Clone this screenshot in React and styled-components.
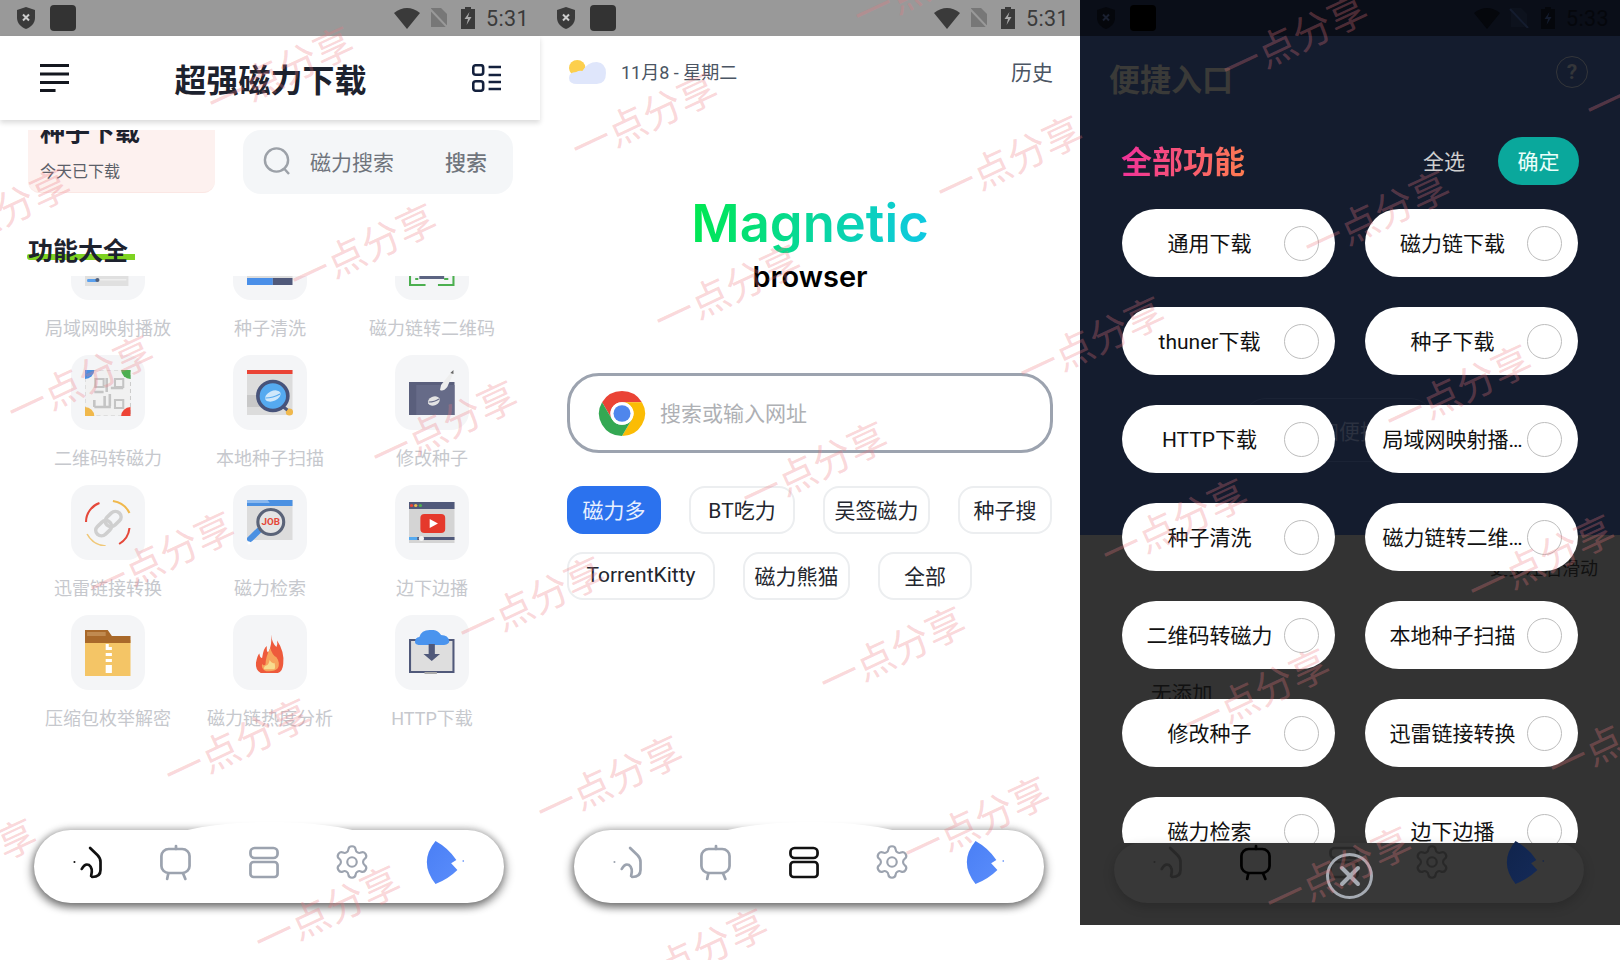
import React from 'react';
import styled, { createGlobalStyle } from 'styled-components';
import { Settings, X } from 'lucide-react';

const GlobalStyle = createGlobalStyle`
  html, body {
    margin: 0;
    padding: 0;
    background: #fff;
    font-family: Roboto, "Noto Sans CJK SC", sans-serif;
  }
  * { box-sizing: border-box; }
`;

const Page = styled.div`
  position: relative;
  width: 1620px;
  height: 960px;
  display: flex;
  align-items: flex-start;
  overflow: hidden;
  background: #fff;
`;

const Screen = styled.div`
  position: relative;
  width: 540px;
  height: ${props => props.$height || 960}px;
  display: flex;
  flex-direction: column;
  background: #fff;
  flex: none;
`;

/* status bar */
const StatusWrap = styled.div`
  height: 36px;
  flex: none;
  display: flex;
  align-items: center;
  padding: 0 11px 0 17px;
  background: ${props => props.$dim ? '#0a0e18' : '#999'};
  color: ${props => props.$dim ? '#05070c' : '#3a3a3a'};
`;

const AppSquare = styled.div`
  width: 26px;
  height: 26px;
  border-radius: 4px;
  margin-left: 15px;
  background: ${props => props.$dim ? '#000' : '#333'};
`;

const StatusRight = styled.div`
  margin-left: auto;
  display: flex;
  align-items: center;
`;

const Clock = styled.span`
  font-size: 21.5px;
  margin-left: 11px;
  letter-spacing: 0.4px;
`;

const StatusBar = ({ time, dim }) => (
  <StatusWrap $dim={dim}>
    <svg width="18" height="22" viewBox="0 0 18 22">
      <path d="M9 0 L18 3 V11 C18 16 14 20 9 22 C4 20 0 16 0 11 V3 Z" fill="currentColor" />
      <path d="M6 7.5 L12 13.5 M12 7.5 L6 13.5" stroke={dim ? '#1a2030' : '#ccc'} strokeWidth="2" />
    </svg>
    <AppSquare $dim={dim} />
    <StatusRight>
      <svg width="26" height="21" viewBox="0 0 26 21">
        <path d="M0 5 Q13 -5 26 5 L13 21 Z" fill="currentColor" />
      </svg>
      <svg width="20" height="20" viewBox="0 0 20 20" style={{ marginLeft: 9 }}>
        <path d="M2 0 H12 L18 6 V19 H2 Z" fill={dim ? '#0d121d' : '#777'} />
        <path d="M1 1 L19 20" stroke={dim ? '#141c2e' : '#999'} strokeWidth="2" />
      </svg>
      <svg width="14" height="22" viewBox="0 0 14 22" style={{ marginLeft: 12 }}>
        <path d="M4 0 H10 V2 H14 V22 H0 V2 H4 Z" fill="currentColor" />
        <path d="M8.5 5 L3.5 12 H7 L5.5 18 L10.5 10 H7 Z" fill={dim ? '#141c2e' : '#aaa'} />
      </svg>
      <Clock>{time}</Clock>
    </StatusRight>
  </StatusWrap>
);

/* floating bottom nav */
const NavBar = styled.nav`
  position: relative;
  flex: none;
  margin: auto 0 ${props => props.$dark ? 22 : 57}px 34px;
  width: 470px;
  height: ${props => props.$dark ? 60 : 73}px;
  display: grid;
  grid-template-columns: repeat(5, 88px);
  align-items: end;
  align-content: end;
  padding: 0 0 17px 10px;
  border-radius: ${props => props.$dark ? '30px 30px 38px 38px' : '40px'};
  background: ${props => props.$dark ? '#383838' : '#fff'};
  box-shadow: ${props => props.$dark
    ? '0 4px 12px rgba(0,0,0,.18)'
    : '-3px 4px 9px rgba(0,0,0,.38), 3px 4px 9px rgba(0,0,0,.3), 0 -3px 6px rgba(0,0,0,.16)'};
`;

const NavBump = styled.div`
  position: absolute;
  left: 92px;
  top: -8px;
  width: 288px;
  height: 44px;
  background: #fff;
  border-radius: 50% 50% 0 0 / 100% 100% 0 0;
`;

const NavCell = styled.div`
  position: relative;
  display: flex;
  justify-content: center;
  height: 48px;
  align-items: center;
  color: ${props => props.$color};
`;

const CloseRing = styled.div`
  position: absolute;
  left: 212px;
  top: 10px;
  width: 47px;
  height: 46px;
  border-radius: 50%;
  border: 3px solid #a6abb3;
  color: #a6abb3;
  display: flex;
  align-items: center;
  justify-content: center;
`;

const Glyph = ({ children }) => (
  <svg width="50" height="48" viewBox="0 0 48 48" preserveAspectRatio="none" fill="none" stroke="currentColor" strokeWidth="2.6" strokeLinecap="round" strokeLinejoin="round" style={{ overflow: 'visible' }}>
    {children}
  </svg>
);

const BottomNav = ({ active, dark, children }) => {
  const idle = dark ? '#282828' : '#9ca3af';
  const on = dark ? '#000' : '#111';
  const color = i => (i === active ? on : idle);
  return (
    <NavBar $dark={dark}>
      {!dark && <NavBump />}
      <NavCell $color={color(0)}>
        <Glyph>
          <path d="M26 10 L33 17 Q36 20 36 24 V32 Q36 39 28 39" />
          <path d="M18 31 Q21 25 25 27 Q29 30 27 38" />
          <circle cx="11" cy="24" r="0.5" strokeWidth="1" />
        </Glyph>
      </NavCell>
      <NavCell $color={color(1)}>
        <Glyph>
          <rect x="10" y="11" width="27" height="24" rx="7" />
          <path d="M24 8 V11 M16.5 36 L15.5 41 M31 36 L33 41" />
        </Glyph>
      </NavCell>
      <NavCell $color={color(2)}>
        <Glyph>
          <rect x="11" y="10" width="26" height="10" rx="4" />
          <rect x="11" y="24" width="26" height="15" rx="3" />
        </Glyph>
      </NavCell>
      <NavCell $color={color(3)}>
        <Settings size={38} strokeWidth={1.35} />
      </NavCell>
      <NavCell>
        <svg width="50" height="48" viewBox="0 0 48 48" preserveAspectRatio="none" style={{ overflow: 'visible' }}>
          <defs>
            <linearGradient id={dark ? 'fanDark' : 'fanLight'} x1="0" y1="0" x2="1" y2="1">
              <stop offset="0" stopColor={dark ? '#10244c' : '#4a7ff5'} />
              <stop offset="1" stopColor={dark ? '#142a58' : '#5a8dfb'} />
            </linearGradient>
          </defs>
          <path d="M19.7 3 Q32 10 39.7 22 L34.7 25.3 L40.7 32 Q32 41 19.7 46 Q3 24 19.7 3 Z" fill={`url(#${dark ? 'fanDark' : 'fanLight'})`} />
          <circle cx="46.3" cy="23" r="0.8" fill={dark ? '#10244c' : '#4a7ff5'} />
        </svg>
      </NavCell>
      {children}
    </NavBar>
  );
};

/* first screen */
const Header = styled.header`
  position: relative;
  z-index: 2;
  height: 84px;
  flex: none;
  display: flex;
  align-items: center;
  justify-content: space-between;
  padding: 0 39px 0 40px;
  background: #fff;
  box-shadow: 0 3px 5px rgba(0,0,0,.14);
`;

const HeaderTitle = styled.h1`
  margin: 0;
  font-size: 32px;
  font-weight: 700;
  color: #1d222e;
`;

const TopRow = styled.div`
  height: 74px;
  flex: none;
  display: flex;
  gap: 28px;
  padding: 10px 0 0 28px;
`;

const SeedCard = styled.div`
  width: 187px;
  height: 63px;
  display: flex;
  flex-direction: column;
  justify-content: flex-end;
  padding: 0 0 7px 12px;
  overflow: hidden;
  border-radius: 0 0 12px 12px;
  background: #fdf1ef;
  border-bottom: 1px solid #fbe7e4;
`;

const SeedTitle = styled.div`
  font-size: 25px;
  font-weight: 700;
  line-height: 32px;
  margin-bottom: 10px;
  color: #1d222e;
  white-space: nowrap;
`;

const SeedSub = styled.div`
  font-size: 16px;
  line-height: 26px;
  color: #5b6068;
`;

const SearchPill = styled.div`
  width: 270px;
  height: 64px;
  border-radius: 18px;
  background: #f4f6f8;
  display: flex;
  align-items: center;
  padding: 0 26px 2px 20px;
`;

const SearchHint = styled.span`
  font-size: 21px;
  color: #6f747c;
  margin-left: 19px;
`;

const SearchAction = styled.span`
  margin-left: auto;
  font-size: 21px;
  font-weight: 500;
  color: #70757d;
`;

const SectionTitle = styled.h2`
  position: relative;
  align-self: flex-start;
  width: 108px;
  margin: 43px 0 0 27px;
  padding: 1px 0 0 1px;
  height: 39px;
  font-size: 25px;
  line-height: 28px;
  font-weight: 700;
  color: #1d222e;
  white-space: nowrap;
  z-index: 0;
  &::after {
    content: '';
    position: absolute;
    z-index: -1;
    left: 0;
    top: 17px;
    width: 108px;
    height: 6px;
    border-radius: 2px 0 0 3px;
    background: #7ed321;
  }
`;

const GridClip = styled.div`
  height: 470px;
  flex: none;
  overflow: hidden;
`;

const ToolGrid = styled.div`
  margin-top: -51px;
  padding-left: 27px;
  display: grid;
  grid-template-columns: repeat(3, 162px);
  row-gap: 11px;
`;

const Tool = styled.div`
  display: flex;
  flex-direction: column;
  align-items: center;
`;

const Tile = styled.div`
  width: 74px;
  height: 75px;
  border-radius: 18px;
  background: #f4f5f7;
  display: flex;
  align-items: center;
  justify-content: center;
`;

const ToolLabel = styled.div`
  margin-top: 14px;
  height: 30px;
  line-height: 30px;
  font-size: 18px;
  color: #c6c8cd;
  white-space: nowrap;
`;

const Art = ({ children }) => (
  <svg width="45.5" height="46" viewBox="0 0 44 46" preserveAspectRatio="none">{children}</svg>
);

const arts = {
  lan: (
    <Art>
      <rect x="0" y="12" width="42" height="34" fill="#e0e0e0" />
      <rect x="2" y="39" width="38" height="1.5" fill="#eee" />
      <rect x="2" y="39" width="10" height="3" rx="1" fill="#5aa0ee" />
      <circle cx="12" cy="40" r="2" fill="#50607c" />
    </Art>
  ),
  clean: (
    <Art>
      <rect x="0" y="12" width="44" height="28" fill="#ddd" />
      <rect x="0" y="38" width="25" height="7" fill="#4a8fe8" />
      <rect x="25" y="38" width="19" height="7" fill="#50597a" />
    </Art>
  ),
  qr2: (
    <Art>
      <rect x="10" y="34" width="24" height="5" fill="#5c6482" />
      <path d="M1 36 V45 H16 M43 36 V45 H28" fill="none" stroke="#4caf50" strokeWidth="2" />
      <path d="M6 39 H9 M34 39 H38" stroke="#4caf50" strokeWidth="2" />
    </Art>
  ),
  qr: (
    <Art>
      <rect x="0" y="0" width="44" height="46" fill="#f1f1f1" stroke="#ccc" strokeDasharray="4 3" />
      <path d="M0 0 H9 A9 9 0 0 1 0 9 Z" fill="#4a90e2" />
      <path d="M44 0 H35 A9 9 0 0 0 44 9 Z" fill="#4caf50" />
      <path d="M0 46 H9 A9 9 0 0 0 0 37 Z" fill="#f0b84c" />
      <path d="M44 46 H35 A9 9 0 0 1 44 37 Z" fill="#ee4436" />
      <g fill="none" stroke="#c4c4c4" strokeWidth="2">
        <rect x="10" y="9" width="8" height="8" />
        <rect x="29" y="9" width="8" height="8" />
        <rect x="29" y="30" width="8" height="8" />
      </g>
      <path d="M21 8 V22 M25 18 H37 M9 22 H18 M9 37 H25 M9 30 V37 M19 26 V36 M24 24 V36" fill="none" stroke="#c4c4c4" strokeWidth="2.5" />
    </Art>
  ),
  scan: (
    <Art>
      <rect x="0" y="0" width="44" height="45" fill="#dcdcdc" />
      <rect x="0" y="0" width="44" height="4" fill="#ea4335" />
      <rect x="0" y="25" width="14" height="12" fill="#c8c8c8" />
      <circle cx="41" cy="42" r="3.5" fill="#f0b84c" />
      <path d="M34 36 L39 40" stroke="#50597a" strokeWidth="3" />
      <circle cx="25" cy="26" r="14.5" fill="#55aaf0" stroke="#47537a" strokeWidth="3.5" />
      <ellipse cx="25" cy="26" rx="8" ry="5" fill="#cfe8fb" transform="rotate(-25 25 26)" />
      <path d="M18 28 Q25 28 32 24" stroke="#55aaf0" strokeWidth="1.2" fill="none" />
    </Art>
  ),
  edit: (
    <Art>
      <rect x="0" y="12" width="44" height="33" fill="#5a5f7c" />
      <rect x="7" y="15" width="37" height="30" fill="#666b88" />
      <path d="M31 15 L41 2 L43 3 L37 17 Q33 22 30 20 Z" fill="#eee" />
      <path d="M40 3 L43 0 L43 4 Z" fill="#666" />
      <ellipse cx="24" cy="31" rx="6" ry="4.4" fill="#e4e4e4" transform="rotate(-25 24 31)" />
      <path d="M19 32 Q25 32 29 29" stroke="#666b88" strokeWidth="1" fill="none" />
    </Art>
  ),
  link: (
    <Art>
      <path d="M14 3 A20 20 0 0 0 1 22" fill="none" stroke="#e5483a" strokeWidth="2" />
      <path d="M27 1 A21 21 0 0 1 43 13" fill="none" stroke="#f0b84c" strokeWidth="2" />
      <path d="M43 28 A21 21 0 0 1 33 44" fill="none" stroke="#e5483a" strokeWidth="2" />
      <path d="M2 34 A22 22 0 0 0 20 46" fill="none" stroke="#f0c878" strokeWidth="1.5" />
      <g fill="none" stroke="#cfcfcf" strokeWidth="3.5" transform="rotate(-45 23 24)">
        <rect x="8" y="18" width="17" height="11" rx="5.5" />
        <rect x="21" y="18" width="17" height="11" rx="5.5" />
      </g>
    </Art>
  ),
  job: (
    <Art>
      <rect x="0" y="0" width="44" height="40" fill="#dcdcdc" />
      <rect x="0" y="0" width="44" height="6" fill="#4a90e2" />
      <path d="M0 0 H20 L22 3 H0 Z" fill="#8ab8ee" />
      <path d="M11 31 L3 39" stroke="#4a90e2" strokeWidth="6" strokeLinecap="round" />
      <circle cx="2" cy="43" r="1.5" fill="#fff" />
      <circle cx="23" cy="22" r="12.5" fill="#e4e4e4" stroke="#5a6378" strokeWidth="3" />
      <text x="23" y="25.5" textAnchor="middle" fontSize="9.5" fontWeight="700" fill="#e5483a" fontFamily="Roboto, sans-serif">JOB</text>
    </Art>
  ),
  video: (
    <Art>
      <rect x="0" y="2" width="44" height="41" fill="#d4d4d4" />
      <rect x="0" y="2" width="44" height="7" fill="#50597a" />
      <circle cx="2.5" cy="5.5" r="1.6" fill="#ea4335" />
      <circle cx="6.5" cy="5.5" r="1.6" fill="#f0b84c" />
      <circle cx="11" cy="5.5" r="1.6" fill="#4caf50" />
      <rect x="11" y="14" width="24" height="19" rx="4" fill="#e5392c" />
      <path d="M20 19 L28 23.5 L20 28 Z" fill="#fff" />
      <rect x="0" y="37" width="44" height="3" fill="#50597a" />
      <rect x="0" y="37" width="8" height="3" fill="#55aaf0" />
      <circle cx="12" cy="38.5" r="2.5" fill="#f4f4f4" />
    </Art>
  ),
  zip: (
    <Art>
      <rect x="0" y="10" width="44" height="36" fill="#f4c566" />
      <path d="M0 0 H22 L26 6 H44 V13 H0 Z" fill="#a9692a" />
      <rect x="2" y="2" width="18" height="4" fill="#c08a50" />
      <path d="M20 14 h3 v3 h3 v3 h-3 v3 h3 v3 h-3 v3 h3 v3 h-3 v3 h3 v8 h-6 v-8 h3 v-3 h-3 v-3 h3 v-3 h-3 v-3 h3 v-3 h-3 Z" fill="#fff" />
    </Art>
  ),
  fire: (
    <Art>
      <g transform="translate(8 3) scale(0.66 0.93)">
        <path d="M23 2 Q25 12 31 15 Q33 11 32 8 Q43 20 41 33 Q40 42 33 43 H8 Q0 40 1 32 Q3 24 6 22 Q7 27 10 27 Q12 16 17 14 Q16 20 19 21 Q25 13 23 2 Z" fill="#ee5a3c" />
        <path d="M22 16 Q25 24 31 26 Q37 32 33 38 Q28 42 16 41 Q8 39 10 33 Q12 36 15 34 Q15 26 22 16 Z" fill="#f7a35c" />
        <path d="M21 29 Q25 34 28 32 Q30 37 28 39 H13 Q12 36 16 35 Q20 34 21 29 Z" fill="#f8dc8e" />
      </g>
    </Art>
  ),
  http: (
    <Art>
      <rect x="1" y="10" width="42" height="32" fill="#dedede" stroke="#50597a" strokeWidth="2" />
      <rect x="15" y="42" width="12" height="2" fill="#aaa" />
      <path d="M6 13 Q5 8 10 7 Q12 0 20 0 Q27 -1 31 5 Q38 5 39 11 Q39 14 34 15 H11 Q7 15 6 13 Z" fill="#4a94ee" />
      <path d="M19 14 H25 V24 H30 L22 31 L14 24 H19 Z" fill="#50597a" />
    </Art>
  ),
};

const tools = [
  ['局域网映射播放', 'lan'], ['种子清洗', 'clean'], ['磁力链转二维码', 'qr2'],
  ['二维码转磁力', 'qr'], ['本地种子扫描', 'scan'], ['修改种子', 'edit'],
  ['迅雷链接转换', 'link'], ['磁力检索', 'job'], ['边下边播', 'video'],
  ['压缩包枚举解密', 'zip'], ['磁力链热度分析', 'fire'], ['HTTP下载', 'http'],
];

const HomeScreen = () => (
  <Screen>
    <StatusBar time="5:31" />
    <Header>
      <svg width="29" height="28" viewBox="0 0 28 28" preserveAspectRatio="none">
        <path d="M0 1.5 H28 M0 10 H28 M0 18.5 H28 M0 26.5 H15" stroke="#14171f" strokeWidth="3" />
      </svg>
      <HeaderTitle>超强磁力下载</HeaderTitle>
      <svg width="29" height="28" viewBox="0 0 28 28" preserveAspectRatio="none" fill="none" stroke="#14213d" strokeWidth="2.5">
        <rect x="1.2" y="1.2" width="9.6" height="9.6" rx="2.5" />
        <rect x="1.2" y="17.2" width="9.6" height="9.6" rx="2.5" />
        <path d="M16 3 H28 M16 11 H28 M16 18 H28 M16 25 H28" />
      </svg>
    </Header>
    <TopRow>
      <SeedCard>
        <SeedTitle>种子下载</SeedTitle>
        <SeedSub>今天已下载</SeedSub>
      </SeedCard>
      <SearchPill>
        <svg width="28" height="28" viewBox="0 0 27 28" fill="none" stroke="#9ca1a8" strokeWidth="2.4">
          <circle cx="13" cy="13" r="11.6" />
          <path d="M21 22 L25.5 27" />
        </svg>
        <SearchHint>磁力搜索</SearchHint>
        <SearchAction>搜索</SearchAction>
      </SearchPill>
    </TopRow>
    <SectionTitle>功能大全</SectionTitle>
    <GridClip>
      <ToolGrid>
        {tools.map(([name, art]) => (
          <Tool key={name}>
            <Tile>{arts[art]}</Tile>
            <ToolLabel>{name}</ToolLabel>
          </Tool>
        ))}
      </ToolGrid>
    </GridClip>
    <BottomNav active={0} />
  </Screen>
);

/* second screen */
const DateBar = styled.div`
  height: 72px;
  flex: none;
  display: flex;
  align-items: center;
  padding: 0 27px 0 28px;
`;

const DateText = styled.span`
  margin: 0 0 2px 14px;
  font-size: 18px;
  color: #4b5563;
`;

const History = styled.span`
  margin: 0 0 2px auto;
  font-size: 21px;
  color: #4b5563;
`;

const Brand = styled.div`
  margin-top: 85px;
  text-align: center;
  font-family: Inter, sans-serif;
`;

const BrandName = styled.div`
  width: max-content;
  margin: 0 auto;
  font-size: 52.5px;
  line-height: 60px;
  font-weight: 600;
  background: linear-gradient(100deg, #00e84e 0%, #0fc8e6 100%);
  -webkit-background-clip: text;
  background-clip: text;
  color: transparent;
`;

const BrandSub = styled.div`
  margin-top: 6px;
  font-size: 29px;
  line-height: 36px;
  font-weight: 600;
  color: #000;
`;

const UrlBox = styled.div`
  margin: 78px 0 0 27px;
  width: 486px;
  height: 80px;
  flex: none;
  border: 3px solid #9ca3af;
  border-radius: 32px;
  display: flex;
  align-items: center;
  padding-left: 28px;
`;

const UrlHint = styled.span`
  margin: 0 0 2px 14px;
  font-size: 21px;
  color: #aeb0b4;
`;

const Engines = styled.div`
  margin: 33px 0 0 27px;
  width: 500px;
  display: flex;
  flex-wrap: wrap;
  gap: 18px 28px;
`;

const Engine = styled.div`
  width: ${props => props.$w}px;
  height: 48px;
  padding-bottom: 2px;
  display: flex;
  align-items: center;
  justify-content: center;
  font-size: 21px;
  border-radius: 16px;
  white-space: nowrap;
  color: ${props => props.$on ? '#e8f0ff' : '#23262e'};
  background: ${props => props.$on ? '#2b72ee' : '#fff'};
  border: 2px solid ${props => props.$on ? '#2b72ee' : '#eceef0'};
`;

const engines = [
  ['磁力多', 94, true], ['BT吃力', 106], ['吴签磁力', 107], ['种子搜', 94],
  ['TorrentKitty', 148], ['磁力熊猫', 107], ['全部', 94],
];

const BrowserScreen = () => (
  <Screen>
    <StatusBar time="5:31" />
    <DateBar>
      <svg width="39" height="26" viewBox="0 0 38 26" preserveAspectRatio="none">
        <circle cx="9" cy="9" r="8" fill="#fccf4d" />
        <path d="M9 25 Q1 25 1 19 Q1 13 8 13 Q11 11 14 12 Q19 3 28 3 Q37 4 37 14 Q37 25 28 25 Z" fill="#dfe6fb" />
      </svg>
      <DateText>11月8 - 星期二</DateText>
      <History>历史</History>
    </DateBar>
    <Brand>
      <BrandName>Magnetic</BrandName>
      <BrandSub>browser</BrandSub>
    </Brand>
    <UrlBox>
      <svg width="48" height="47" viewBox="0 0 48 48" preserveAspectRatio="none">
        <path d="M4.08 12.5 A23 23 0 0 1 43.92 12.5 H24 A11.5 11.5 0 0 0 14.04 29.75 Z" fill="#ea4335" />
        <path d="M43.92 12.5 A23 23 0 0 1 24 47 L33.96 29.75 A11.5 11.5 0 0 0 24 12.5 Z" fill="#fbbc05" />
        <path d="M24 47 A23 23 0 0 1 4.08 12.5 L14.04 29.75 A11.5 11.5 0 0 0 33.96 29.75 Z" fill="#34a853" />
        <circle cx="24" cy="24" r="11.5" fill="#fff" />
        <circle cx="24" cy="24" r="8.5" fill="#4f86ec" />
      </svg>
      <UrlHint>搜索或输入网址</UrlHint>
    </UrlBox>
    <Engines>
      {engines.map(([name, w, on]) => (
        <Engine key={name} $w={w} $on={on}>{name}</Engine>
      ))}
    </Engines>
    <BottomNav active={2} />
  </Screen>
);

/* third screen: picker sheet over the dimmed shortcut page */
const Backdrop = styled.div`
  position: absolute;
  inset: 0;
  display: flex;
  flex-direction: column;
  background: #333;
`;

const BackdropTop = styled.div`
  height: 535px;
  flex: none;
  padding: 36px 32px 0 29px;
  background: #141c2e;
`;

const BackdropHead = styled.div`
  height: 88px;
  display: flex;
  align-items: center;
  justify-content: space-between;
`;

const BackdropTitle = styled.div`
  padding-bottom: 6px;
  font-size: 31px;
  font-weight: 700;
  color: #3a3a38;
`;

const HelpRing = styled.div`
  width: 32px;
  height: 32px;
  margin-top: -16px;
  border-radius: 50%;
  border: 1.5px solid #34363a;
  color: #34363a;
  font-size: 21px;
  font-weight: 700;
  display: flex;
  align-items: center;
  justify-content: center;
`;

const FaintPill = styled.div`
  margin: 274px 0 0 133px;
  width: 192px;
  height: 64px;
  border: 1px solid #1b2335;
  border-radius: 24px;
  display: flex;
  align-items: center;
  padding-left: 54px;
  font-size: 21px;
  color: #2b3140;
  white-space: nowrap;
`;

const SwipeHint = styled.div`
  margin-top: 22px;
  padding-right: 22px;
  text-align: right;
  font-size: 18px;
  line-height: 24px;
  color: #111;
`;

const EmptyHint = styled.div`
  margin: 100px 0 0 71px;
  font-size: 20.5px;
  line-height: 26px;
  color: #111;
`;

const Sheet = styled.div`
  position: relative;
  flex: 1;
  display: flex;
  flex-direction: column;
`;

const SheetHead = styled.div`
  margin-top: 101px;
  height: 48px;
  flex: none;
  display: flex;
  align-items: center;
  padding: 0 41px 0 41px;
`;

const SheetTitle = styled.div`
  padding-bottom: 3px;
  font-size: 31px;
  font-weight: 700;
  background: linear-gradient(100deg, #f02e9c 0%, #ff7d4e 100%);
  -webkit-background-clip: text;
  background-clip: text;
  color: transparent;
`;

const SelectAll = styled.span`
  margin: 0 0 2px auto;
  font-size: 21px;
  color: #cfcfcf;
`;

const Confirm = styled.span`
  margin-left: 33px;
  width: 81px;
  height: 48px;
  padding-bottom: 2px;
  border-radius: 24px;
  background: #0aa89c;
  color: #eafffb;
  font-size: 21px;
  display: flex;
  align-items: center;
  justify-content: center;
`;

const ChipClip = styled.div`
  margin-top: 24px;
  height: 634px;
  flex: none;
  overflow: hidden;
`;

const ChipGrid = styled.div`
  padding-left: 42px;
  display: grid;
  grid-template-columns: 213px 213px;
  column-gap: 30px;
  row-gap: 30px;
`;

const Chip = styled.div`
  height: 68px;
  border-radius: 34px;
  background: #fff;
  display: flex;
  align-items: center;
  padding: 0 16px 0 15px;
`;

const ChipLabel = styled.span`
  width: 145px;
  margin: 0 2px 2px 0;
  text-align: center;
  font-size: 21px;
  color: #111;
  white-space: nowrap;
`;

const Radio = styled.span`
  width: 35px;
  height: 35px;
  flex: none;
  border-radius: 50%;
  border: 1.5px solid #bdbdbd;
`;

const chips = [
  '通用下载', '磁力链下载', 'thuner下载', '种子下载', 'HTTP下载', '局域网映射播…',
  '种子清洗', '磁力链转二维…', '二维码转磁力', '本地种子扫描', '修改种子', '迅雷链接转换',
  '磁力检索', '边下边播',
];

const PickerScreen = () => (
  <Screen $height={925}>
    <Backdrop>
      <BackdropTop>
        <BackdropHead>
          <BackdropTitle>便捷入口</BackdropTitle>
          <HelpRing>?</HelpRing>
        </BackdropHead>
        <FaintPill>添加便捷入口</FaintPill>
      </BackdropTop>
      <SwipeHint>更多左右滑动</SwipeHint>
      <EmptyHint>无添加</EmptyHint>
    </Backdrop>
    <Sheet>
      <StatusBar time="5:33" dim />
      <SheetHead>
        <SheetTitle>全部功能</SheetTitle>
        <SelectAll>全选</SelectAll>
        <Confirm>确定</Confirm>
      </SheetHead>
      <ChipClip>
        <ChipGrid>
          {chips.map(name => (
            <Chip key={name}>
              <ChipLabel>{name}</ChipLabel>
              <Radio />
            </Chip>
          ))}
        </ChipGrid>
      </ChipClip>
      <BottomNav active={1} dark>
        <CloseRing>
          <X size={32} strokeWidth={3} />
        </CloseRing>
      </BottomNav>
    </Sheet>
  </Screen>
);

/* watermark stamps lying over all three shots */
const Stamps = styled.div`
  position: absolute;
  inset: 0;
  z-index: 10;
  pointer-events: none;
`;

const Stamp = styled.span`
  position: absolute;
  left: ${props => props.$x}px;
  top: ${props => props.$y}px;
  width: 160px;
  margin: -24px 0 0 -80px;
  font-size: 39px;
  line-height: 48px;
  text-align: center;
  white-space: nowrap;
  color: rgba(238, 120, 128, 0.3);
  transform: rotate(-25deg);
`;

const stamps = [
  [281, 73], [-2, 215], [364, 250], [81, 382], [445, 427], [162, 558], [532, 603], [238, 745],
  [-36, 865], [328, 912], [927, -14], [645, 119], [1010, 162], [728, 291], [1092, 343], [815, 468],
  [893, 653], [610, 782], [977, 823], [695, 955], [1295, 40], [1377, 217], [1659, 80], [1459, 391],
  [1175, 525], [1542, 561], [1257, 695], [1622, 738], [1339, 873],
];

const App = () => (
  <Page>
    <GlobalStyle />
    <HomeScreen />
    <BrowserScreen />
    <PickerScreen />
    <Stamps>
      {stamps.map(([x, y]) => (
        <Stamp key={`${x}-${y}`} $x={x} $y={y}>一点分享</Stamp>
      ))}
    </Stamps>
  </Page>
);

export default App;
